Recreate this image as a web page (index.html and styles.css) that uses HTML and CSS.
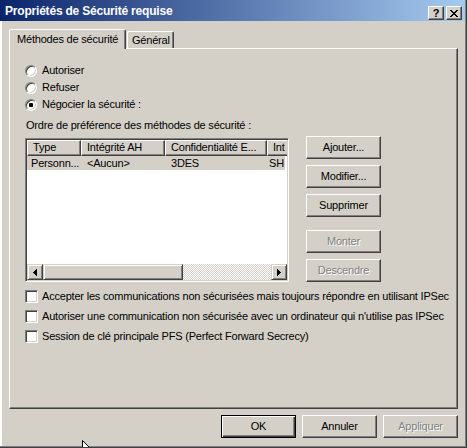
FILE: index.html
```html
<!DOCTYPE html>
<html lang="fr">
<head>
<meta charset="utf-8">
<title>Propriétés de Sécurité requise</title>
<link rel="stylesheet" href="styles.css">
</head>
<body>
<div class="window">
  <div class="titlebar">
    <span class="title">Propriétés de Sécurité requise</span>
    <div class="tbtns">
      <div class="tbtn help">?</div>
      <div class="tbtn close"><svg width="8" height="7" viewBox="0 0 8 7"><path d="M0 0h2v1h-2z M6 0h2v1h-2z M1 1h2v1h-2z M5 1h2v1h-2z M2 2h4v1h-4z M3 3h2v1h-2z M2 4h4v1h-4z M1 5h2v1h-2z M5 5h2v1h-2z M0 6h2v1h-2z M6 6h2v1h-2z" fill="#000"/></svg></div>
    </div>
  </div>
  <div class="client">
    <div class="tabs">
      <div class="tab active">Méthodes de sécurité</div>
      <div class="tab inactive">Général</div>
    </div>
    <div class="panel">
      <div class="radio-row"><span class="radio"></span><span class="lbl">Autoriser</span></div>
      <div class="radio-row"><span class="radio"></span><span class="lbl">Refuser</span></div>
      <div class="radio-row"><span class="radio checked"></span><span class="lbl">Négocier la sécurité :</span></div>
      <div class="group-label">Ordre de préférence des méthodes de sécurité :</div>
      <div class="methods">
        <div class="listview">
          <div class="lv-content">
            <div class="lv-header">
              <div class="th c1">Type</div>
              <div class="th c2">Intégrité AH</div>
              <div class="th c3">Confidentialité E...</div>
              <div class="th c4">Int</div>
            </div>
            <div class="lv-row selected">
              <div class="td c1 first">Personn...</div>
              <div class="td c2">&lt;Aucun&gt;</div>
              <div class="td c3">3DES</div>
              <div class="td c4">SH</div>
            </div>
          </div>
          <div class="hscroll">
            <div class="sbtn"><svg width="4" height="7" viewBox="0 0 4 7"><path d="M3 0h1v7h-1z M2 1h1v5h-1z M1 2h1v3h-1z M0 3h1v1h-1z" fill="#000"/></svg></div>
            <div class="thumb"></div>
            <div class="track"></div>
            <div class="sbtn"><svg width="4" height="7" viewBox="0 0 4 7"><path d="M0 0h1v7h-1z M1 1h1v5h-1z M2 2h1v3h-1z M3 3h1v1h-1z" fill="#000"/></svg></div>
          </div>
        </div>
        <div class="side-buttons">
          <div class="btn">Ajouter...</div>
          <div class="btn">Modifier...</div>
          <div class="btn">Supprimer</div>
          <div class="btn disabled gap-big">Monter</div>
          <div class="btn disabled">Descendre</div>
        </div>
      </div>
      <div class="check-row first-check"><span class="check"></span><span class="lbl">Accepter les communications non sécurisées mais toujours répondre en utilisant IPSec</span></div>
      <div class="check-row"><span class="check"></span><span class="lbl">Autoriser une communication non sécurisée avec un ordinateur qui n'utilise pas IPSec</span></div>
      <div class="check-row"><span class="check"></span><span class="lbl">Session de clé principale PFS (Perfect Forward Secrecy)</span></div>
    </div>
    <div class="dialog-buttons">
      <div class="btn default">OK</div>
      <div class="btn">Annuler</div>
      <div class="btn disabled">Appliquer</div>
    </div>
  </div>
  <svg class="cursor" width="12" height="19" viewBox="0 0 12 19"><path d="M0.5 0.5V16.5L4.5 12.5L7 18L9 17L6.5 11.5H11.5Z" fill="#fff" stroke="#000" stroke-width="1"/></svg>
</div>
</body>
</html>
```

FILE: styles.css
```css
* { box-sizing: border-box; }
html, body { margin: 0; padding: 0; }
body {
  background: #d4d0c8;
  font-family: "Liberation Sans", Arial, sans-serif;
  font-size: 11px;
  letter-spacing: -0.2px;
  color: #000;
}
.window {
  position: relative;
  width: 467px;
  height: 448px;
  background: #d4d0c8;
  border-right: 1px solid #404040;
  border-bottom: 1px solid #404040;
  box-shadow: inset -1px -1px 0 #808080, inset 2px 0 0 #ffffff, inset 1px 0 0 #d4d0c8;
  overflow: hidden;
}
.titlebar {
  height: 21px;
  width: 465px;
  background: linear-gradient(to right, #0a246a 0%, #a6caf0 100%);
  display: flex;
  justify-content: space-between;
  align-items: flex-end;
  padding: 0 3px 1px 5px;
}
.title {
  color: #fff;
  font-weight: bold;
  font-size: 12px;
  letter-spacing: -0.2px;
  line-height: 13px;
  align-self: flex-start;
  margin-top: 5px;
}
.tbtns { display: flex; gap: 2px; }
.tbtn {
  width: 16px;
  height: 14px;
  background: #d4d0c8;
  border: 1px solid;
  border-color: #fff #404040 #404040 #fff;
  box-shadow: inset -1px -1px 0 #808080;
  display: flex;
  align-items: center;
  justify-content: center;
  font-weight: bold;
  font-size: 11px;
  letter-spacing: 0;
  line-height: 12px;
}
.tbtn.help { padding-bottom: 1px; }
.client {
  padding: 8px 0 0 9px;
}
.tabs {
  display: flex;
  align-items: flex-end;
  height: 20px;
  margin-bottom: -1px;
  position: relative;
  z-index: 1;
}
.tab {
  background: #d4d0c8;
  border-top: 1px solid #fff;
  border-left: 1px solid #fff;
  border-right: 1px solid #404040;
  border-radius: 2px 2px 0 0;
  box-shadow: inset -1px 0 0 #808080;
  line-height: 13px;
  white-space: nowrap;
}
.tab.active {
  width: 117px;
  height: 20px;
  padding: 3px 0 0 7px;
}
.tab.inactive {
  width: 47px;
  height: 17px;
  margin-left: 1px;
  margin-bottom: 1px;
  padding: 2px 0 0 4px;
}
.panel {
  width: 449px;
  height: 361px;
  border-top: 1px solid #fff;
  border-left: 1px solid #fff;
  border-right: 1px solid #404040;
  border-bottom: 1px solid #404040;
  box-shadow: inset -1px -1px 0 #808080;
  padding: 13px 0 0 15px;
}
.radio-row, .check-row {
  display: flex;
  align-items: center;
}
.radio-row { height: 17px; }
.radio {
  width: 12px;
  height: 12px;
  border-radius: 50%;
  background: #fff;
  border: 1px solid;
  border-color: #808080 #fff #fff #808080;
  box-shadow: inset 1px 1px 0 #404040, inset -1px -1px 0 #d4d0c8;
  margin-right: 5px;
  position: relative;
  flex: none;
}
.radio.checked::after {
  content: "";
  position: absolute;
  left: 3px;
  top: 3px;
  width: 4px;
  height: 4px;
  border-radius: 1px;
  background: #000;
}
.lbl { line-height: 13px; white-space: nowrap; }
.group-label {
  margin: 6px 0 4px 1px;
  line-height: 13px;
}
.methods {
  display: flex;
  align-items: flex-start;
}
.listview {
  width: 264px;
  height: 144px;
  margin-top: 2px;
  background: #fff;
  border: 1px solid;
  border-color: #808080 #fff #fff #808080;
  box-shadow: inset 1px 1px 0 #404040, inset -1px -1px 0 #d4d0c8;
  padding: 1px;
  display: flex;
  flex-direction: column;
}
.lv-content {
  flex: 1;
  overflow: hidden;
}
.lv-header, .lv-row {
  display: flex;
  white-space: nowrap;
}
.lv-header { height: 16px; }
.th {
  flex: none;
  height: 16px;
  background: #d4d0c8;
  border-top: 1px solid #fff;
  border-left: 1px solid #fff;
  border-right: 1px solid #404040;
  border-bottom: 1px solid #404040;
  box-shadow: inset -1px -1px 0 #808080;
  padding: 0 0 0 5px;
  line-height: 13px;
  overflow: hidden;
}
.th.c4 { border-right: none; box-shadow: inset 0 -1px 0 #808080; }
.c1 { width: 54px; }
.c2 { width: 84px; }
.c3 { width: 102px; }
.c4 { width: 20px; }
.lv-row.selected { background: #d4d0c8; height: 14px; width: 258px; }
.td {
  flex: none;
  line-height: 14px;
  padding-left: 6px;
  overflow: hidden;
}
.td.first { padding-left: 4px; }
.td.c4 { padding-left: 2px; }
.hscroll {
  height: 16px;
  display: flex;
  flex: none;
}
.sbtn, .thumb {
  height: 16px;
  background: #d4d0c8;
  border: 1px solid;
  border-color: #d4d0c8 #404040 #404040 #d4d0c8;
  box-shadow: inset 1px 1px 0 #fff, inset -1px -1px 0 #808080;
}
.sbtn {
  width: 16px;
  display: flex;
  align-items: center;
  justify-content: center;
}
.thumb { width: 140px; }
.track {
  flex: 1;
  background: repeating-conic-gradient(#ffffff 0 25%, #d4d0c8 0 50%) 0 0 / 2px 2px;
}
.side-buttons {
  margin-left: 17px;
  display: flex;
  flex-direction: column;
  gap: 6px;
}
.btn {
  width: 75px;
  height: 23px;
  background: #d4d0c8;
  border: 1px solid;
  border-color: #fff #404040 #404040 #fff;
  box-shadow: inset -1px -1px 0 #808080;
  display: flex;
  align-items: center;
  justify-content: center;
  line-height: 13px;
  flex: none;
}
.btn.gap-big { margin-top: 7px; }
.btn.disabled {
  color: #808080;
  text-shadow: 1px 1px 0 #fff;
}
.btn.default {
  border: 1px solid #000;
  box-shadow: inset 1px 1px 0 #fff, inset -1px -1px 0 #404040, inset -2px -2px 0 #808080;
}
.check-row { height: 20px; }
.check-row.first-check { margin-top: 4px; }
.check {
  width: 13px;
  height: 13px;
  background: #fff;
  border: 1px solid;
  border-color: #808080 #fff #fff #808080;
  box-shadow: inset 1px 1px 0 #404040, inset -1px -1px 0 #d4d0c8;
  margin-right: 4px;
  flex: none;
}
.dialog-buttons {
  display: flex;
  justify-content: flex-end;
  gap: 6px;
  width: 449px;
  margin-top: 6px;
}
.cursor {
  position: absolute;
  left: 82px;
  top: 440px;
}
```
